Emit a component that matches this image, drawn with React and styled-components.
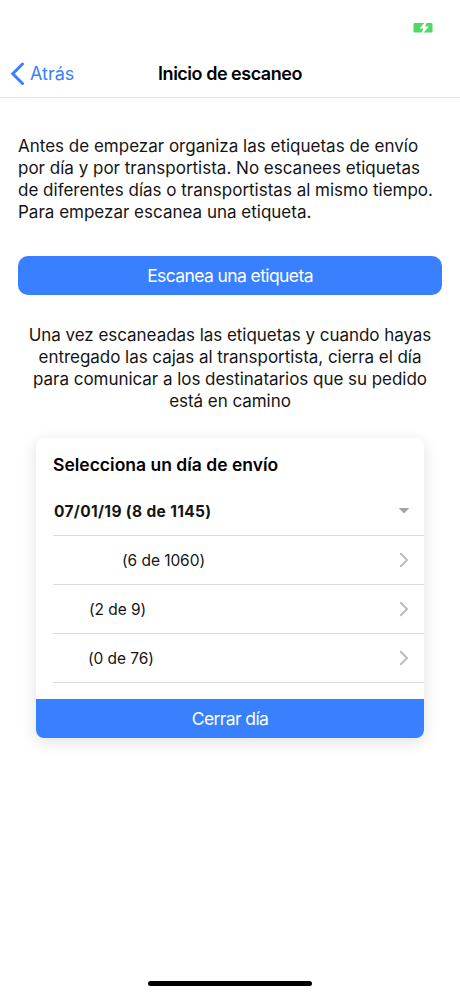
import React from 'react';
import styled, { createGlobalStyle } from 'styled-components';

const Global = createGlobalStyle`
  * { box-sizing: border-box; }
  body { margin: 0; background: #fff; font-family: Inter, sans-serif; color: #151515; }
`;
const Screen = styled.main`
  display: flex; flex-direction: column; width: 460px; height: 996px; background: #fff; overflow: hidden;
`;
const StatusBar = styled.div`
  height: 50px; display: flex; justify-content: flex-end; padding: 22px 26px 0 0; flex: none;
`;
const NavBar = styled.header`
  height: 48px; flex: none; display: grid; grid-template-columns: 1fr auto 1fr; align-items: center;
  padding: 0 10px; border-bottom: 1px solid #e2e2e2;
`;
const Back = styled.button`
  display: flex; align-items: center; gap: 5px; border: 0; padding: 0; background: none;
  color: #3880ff; font: 400 18px Inter, sans-serif;
`;
const Title = styled.h1`
  margin: 0; font-size: 18px; font-weight: 600; line-height: 22px; letter-spacing: -0.48px; color: #000; white-space: nowrap;
`;
const Line = styled.span`
  display: block; width: max-content; white-space: nowrap;
`;
const Intro = styled.p`
  margin: 37px 18px 0; font-size: 17px; line-height: 22px;
`;
const Help = styled.p`
  margin: 29px 0 0; font-size: 17px; line-height: 22px; letter-spacing: -0.04px;
  display: flex; flex-direction: column; align-items: center;
`;
const Button = styled.button`
  border: 0; padding: 0; height: 39px; color: #fff; background: #3880ff;
  font: 400 17.5px Inter, sans-serif; letter-spacing: -0.6px;
`;
const ScanButton = styled(Button)`
  margin: 33px 18px 0; border-radius: 10px;
`;
const Card = styled.section`
  margin: 26px 36px 0; height: 300px; border-radius: 8px; overflow: hidden; background: #fff;
  box-shadow: 0 4px 16px rgba(0,0,0,.12); display: flex; flex-direction: column;
`;
const CardTitle = styled.h2`
  margin: 0; padding: 16px 17px 0; height: 49px; font-size: 17.5px; line-height: 22px; font-weight: 600; color: #000; white-space: nowrap;
`;
const Row = styled.div`
  margin-left: 17px; height: 49px; padding: 0 14px 0 ${p => p.$indent}px; border-bottom: 1px solid #dadada;
  display: flex; align-items: center; justify-content: space-between;
  font-size: 15.5px; font-weight: ${p => (p.$bold ? 700 : 400)};
  letter-spacing: ${p => (p.$bold ? 0.34 : -0.06)}px;
`;
const CloseButton = styled(Button)`
  margin-top: auto;
`;
const HomeIndicator = styled.div`
  width: 164px; height: 5px; border-radius: 3px; background: #000; margin: auto auto 10px;
`;

const intro = ['Antes de empezar organiza las etiquetas de envío', 'por día y por transportista. No escanees etiquetas', 'de diferentes días o transportistas al mismo tiempo.', 'Para empezar escanea una etiqueta.'];
const help = ['Una vez escaneadas las etiquetas y cuando hayas', 'entregado las cajas al transportista, cierra el día', 'para comunicar a los destinatarios que su pedido', 'está en camino'];
const rows = [{ t: '(6 de 1060)', i: 69 }, { t: '(2 de 9)', i: 36 }, { t: '(0 de 76)', i: 35 }];

const Battery = () => (
  <svg width="21" height="11" viewBox="0 0 21 11">
    <rect x="0.5" y="1" width="19" height="9.5" rx="1.3" fill="#4cd964" />
    <path d="M12 0 6.500 6.600h3.800L8.500 11h1.800l5.700-6.600h-3.800L14 0z" fill="#fff" />
  </svg>
);

export default function App() {
  return (
    <Screen>
      <Global />
      <StatusBar><Battery /></StatusBar>
      <NavBar>
        <Back>
          <svg width="15" height="24" viewBox="0 0 15 24" fill="none" stroke="#3880ff" strokeWidth="3" strokeLinecap="round"><path d="M12.500 2 2.800 11.800l9.700 9.700" /></svg>
          Atrás
        </Back>
        <Title>Inicio de escaneo</Title>
      </NavBar>
      <Intro>{intro.map(t => <Line key={t}>{t}</Line>)}</Intro>
      <ScanButton>Escanea una etiqueta</ScanButton>
      <Help>{help.map(t => <Line key={t}>{t}</Line>)}</Help>
      <Card>
        <CardTitle>Selecciona un día de envío</CardTitle>
        <Row $indent={1} $bold>07/01/19 (8 de 1145)
          <svg width="12" height="6" viewBox="0 0 12 6"><path d="M.7 0h10.600L6 5.500z" fill="#a3a3a3" /></svg>
        </Row>
        {rows.map(r => (
          <Row key={r.t} $indent={r.i}>{r.t}
            <svg width="11" height="16" viewBox="0 0 11 16" fill="none" stroke="#bdbdbd" strokeWidth="2" strokeLinecap="round"><path d="M1.800 1.800 8 8l-6.200 6.200" /></svg>
          </Row>
        ))}
        <CloseButton>Cerrar día</CloseButton>
      </Card>
      <HomeIndicator />
    </Screen>
  );
}
